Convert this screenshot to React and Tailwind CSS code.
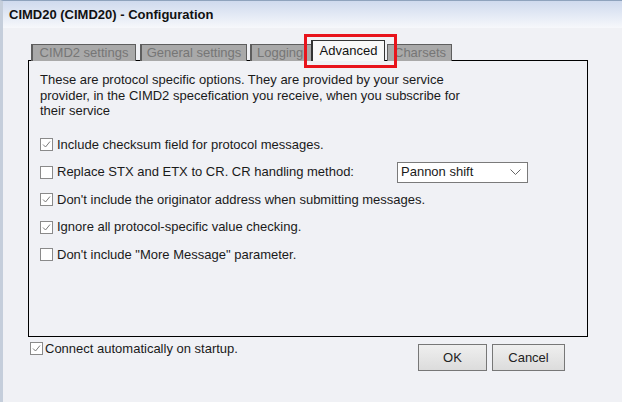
import React from "react";

function Check({ checked }) {
  return (
    <span className="w-[13px] h-[13px] border border-[#8a8a8a] bg-white flex items-center justify-center shrink-0">
      {checked && (
        <svg width="11" height="11" viewBox="0 0 11 11">
          <path d="M2 5.5 L4.5 8 L9 2.5" fill="none" stroke="#7a7a7a" strokeWidth="1" />
        </svg>
      )}
    </span>
  );
}

function Row({ checked, children, extra }) {
  return (
    <div className="flex items-center h-[16px] whitespace-nowrap">
      <Check checked={checked} />
      <span className={extra ? "ml-[4px] w-[340px] shrink-0" : "ml-[4px]"}>{children}</span>
      {extra}
    </div>
  );
}

export default function App() {
  return (
    <div
      className="w-[622px] h-[402px] bg-[#f0f1f5] text-[13px] text-[#1a1a1a] flex flex-col border-l-[3px] border-l-[#c5cedb] border-t border-t-[#8fa3bd] overflow-hidden"
      style={{ fontFamily: '"Liberation Sans", Arial, sans-serif' }}
    >
      <div className="h-[27px] shrink-0 bg-gradient-to-b from-[#cfdaee] to-[#f7f8fb] flex items-center pl-[6px] font-bold text-[13px] text-[#111]">
        CIMD20 (CIMD20) - Configuration
      </div>
      <div className="flex flex-col pl-[25px] pt-[12px]">
        <div className="flex items-end h-[21px] pl-[3px] relative z-10">
          <div className="h-[17px] w-[105px] shrink-0 bg-[#a9a9a9] border border-[#5e5e5e] border-l-2 border-b-0 text-[#767676] flex items-center justify-center">
            CIMD2 settings
          </div>
          <div className="h-[17px] w-[107px] shrink-0 ml-[4px] bg-[#a9a9a9] border border-[#5e5e5e] border-l-2 border-b-0 text-[#767676] flex items-center justify-center">
            General settings
          </div>
          <div className="h-[17px] w-[62px] shrink-0 ml-[3px] bg-[#a9a9a9] border border-[#5e5e5e] border-l-2 border-b-0 border-r-0 text-[#767676] flex items-center pl-[5px] overflow-hidden whitespace-nowrap">
            Logging
          </div>
          <div className="relative z-20 h-[21px] w-[74px] shrink-0 bg-[#f8f8f8] border border-[#333] border-l-2 border-b-0 text-[#111] flex items-center justify-center -ml-[1px]">
            Advanced
            <div className="absolute -left-[9px] -right-[13px] -top-[7px] h-[34px] border-[3px] border-[#e8141c] pointer-events-none" />
          </div>
          <div className="h-[17px] w-[65px] shrink-0 ml-[2px] bg-[#a9a9a9] border border-[#5e5e5e] border-b-0 text-[#767676] flex items-center pl-[6px]">
            Charsets
          </div>
        </div>
        <div className="w-[560px] h-[277px] border border-black -mt-[1px] pl-[11px] pt-[11px] flex flex-col">
          <div className="leading-[15.5px] w-[440px]">
            These are protocol specific options. They are provided by your service provider, in the CIMD2 specefication you receive, when you subscribe for their service
          </div>
          <div className="flex flex-col gap-[11.5px] mt-[18px]">
            <Row checked>Include checksum field for protocol messages.</Row>
            <Row
              extra={
                <div className="h-[21px] w-[131px] shrink-0 border border-[#7a7a7a] bg-white flex items-center justify-between pl-[3px] pr-[6px]">
                  <span>Pannon shift</span>
                  <svg width="11" height="7" viewBox="0 0 11 7">
                    <path d="M0.5 0.5 L5.5 5.5 L10.5 0.5" fill="none" stroke="#666" strokeWidth="1" />
                  </svg>
                </div>
              }
            >
              Replace STX and ETX to CR. CR handling method:
            </Row>
            <Row checked>Don't include the originator address when submitting messages.</Row>
            <Row checked>Ignore all protocol-specific value checking.</Row>
            <Row>Don't include "More Message" parameter.</Row>
          </div>
        </div>
        <div className="flex justify-between pl-[2px] w-[537px]">
          <div className="flex items-start pt-[5px]">
            <Check checked />
            <span className="ml-[2px] leading-[14px]">Connect automatically on startup.</span>
          </div>
          <div className="flex gap-[5px] pt-[7px]">
            <button className="w-[69px] h-[27px] border border-[#777] bg-gradient-to-b from-[#efefef] to-[#dcdcdc] text-[#222]">OK</button>
            <button className="w-[73px] h-[27px] border border-[#777] bg-gradient-to-b from-[#efefef] to-[#dcdcdc] text-[#222]">Cancel</button>
          </div>
        </div>
      </div>
    </div>
  );
}
